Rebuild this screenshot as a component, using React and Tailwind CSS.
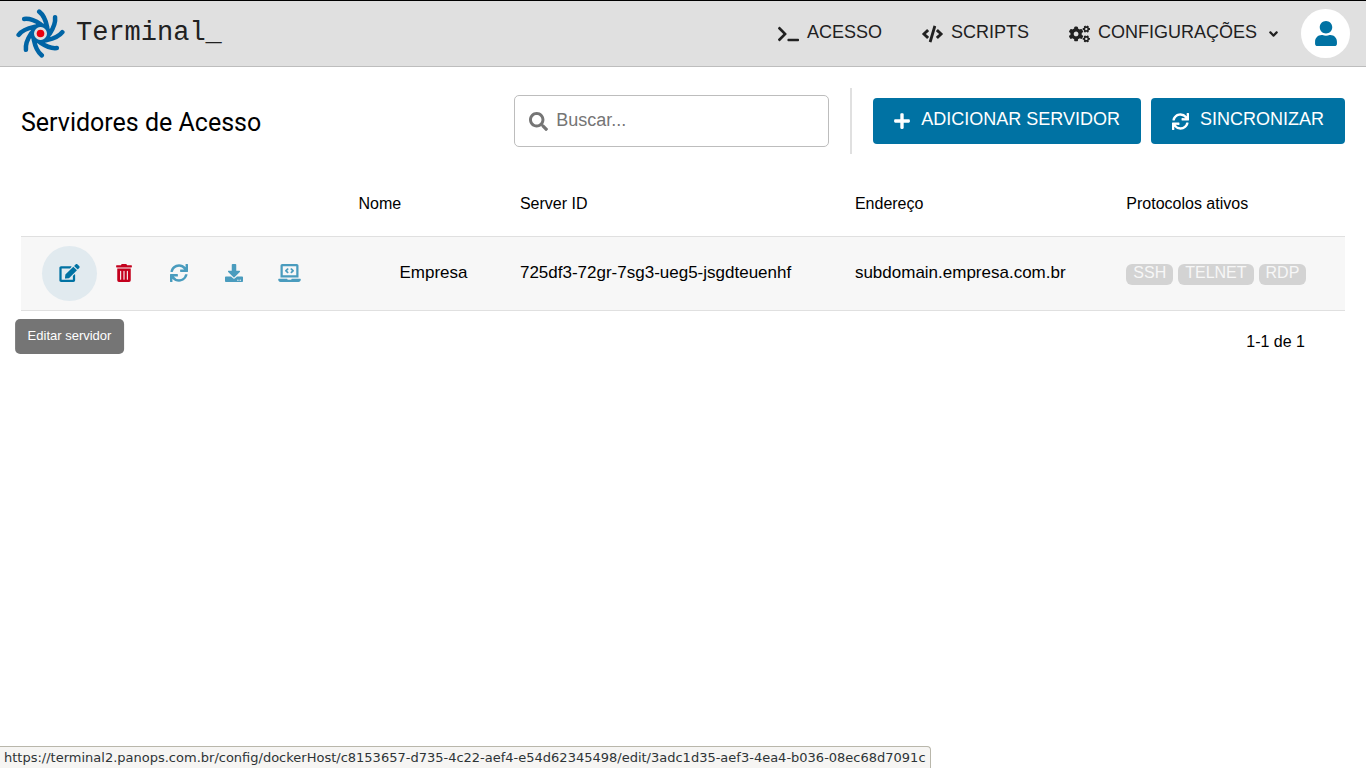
import { useState } from "react";
import {
  FaTerminal,
  FaCode,
  FaCogs,
  FaAngleDown,
  FaUser,
  FaSearch,
  FaPlus,
  FaSync,
  FaEdit,
  FaTrashAlt,
  FaDownload,
  FaLaptopCode,
} from "react-icons/fa";

const EDIT_PATH =
  "/config/dockerHost/c8153657-d735-4c22-aef4-e54d62345498/edit/3adc1d35-aef3-4ea4-b036-08ec68d7091c";

const server = {
  name: "Empresa",
  id: "725df3-72gr-7sg3-ueg5-jsgdteuenhf",
  address: "subdomain.empresa.com.br",
  protocols: ["SSH", "TELNET", "RDP"],
};

function Logo() {
  return (
    <svg viewBox="-25 -25 50 50" className="size-[49px]" aria-hidden="true">
      <g fill="none" stroke="#0064a5" strokeWidth="4.6" strokeLinecap="round">
        {[0, 45, 90, 135, 180, 225, 270, 315].map((angle) => (
          <path key={angle} d="M-1.3 -22.3 C3 -19 5.5 -13 6.8 -6.5" transform={`rotate(${angle})`} />
        ))}
      </g>
      <circle r="8.4" fill="#e0e0e0" stroke="#0064a5" strokeWidth="4.6" />
      <circle r="6.6" fill="#e0e0e0" />
      <circle r="3.9" fill="#e8000f" />
    </svg>
  );
}

function NavItem({ icon, children }) {
  return (
    <a href="#" className="flex items-center gap-2 text-lg text-[#212121]">
      {icon}
      <span className="pb-1">{children}</span>
    </a>
  );
}

function Header() {
  return (
    <header className="flex items-center justify-between border-t border-b border-t-black border-b-[#bdbdbd] bg-[#e0e0e0] px-4 py-2">
      <a href="#" className="flex items-center gap-[11px]">
        <Logo />
        <span className="pb-0.5 font-['Liberation_Mono',monospace] text-[27px] leading-8 text-[#212121]">
          Terminal_
        </span>
      </a>
      <div className="flex items-center gap-[23px]">
        <nav className="flex items-center gap-10">
          <NavItem icon={<FaTerminal className="h-[18px] w-[21px]" />}>ACESSO</NavItem>
          <NavItem icon={<FaCode className="h-[18px] w-[21px]" />}>SCRIPTS</NavItem>
          <button type="button" className="flex items-center gap-2 text-lg text-[#212121]">
            <FaCogs className="h-[18px] w-[21px]" />
            <span className="pb-1">CONFIGURAÇÕES</span>
            <FaAngleDown className="ml-1 h-[14px] w-[9px]" />
          </button>
        </nav>
        <button
          type="button"
          aria-label="Conta"
          className="flex size-[49px] items-center justify-center rounded-full bg-white text-[#0072a3]"
        >
          <FaUser className="h-[25px] w-[22px]" />
        </button>
      </div>
    </header>
  );
}

function PrimaryButton({ icon, children }) {
  return (
    <button
      type="button"
      className="flex h-[46px] items-center gap-[11px] rounded bg-[#0072a3] px-[21px] text-lg text-white"
    >
      {icon}
      <span className="pb-1">{children}</span>
    </button>
  );
}

function Toolbar() {
  const [query, setQuery] = useState("");
  return (
    <div className="flex items-center justify-between">
      <h1 className="pt-1 font-[Roboto,sans-serif] text-[25px] text-black">Servidores de Acesso</h1>
      <div className="flex items-center gap-[21px]">
        <label className="flex h-[52px] w-[315px] items-center gap-2 rounded-[5px] border border-[#bdbdbd] px-3.5 text-[#757575]">
          <FaSearch className="size-[19px] shrink-0" />
          <input
            type="text"
            aria-label="Buscar"
            placeholder="Buscar..."
            value={query}
            onChange={(e) => setQuery(e.target.value)}
            className="w-full min-w-0 bg-transparent pb-0.5 text-lg outline-none placeholder:text-[#757575]"
          />
        </label>
        <div className="h-[66px] w-0.5 bg-[#e0e0e0]" />
        <div className="flex items-center gap-2.5">
          <PrimaryButton icon={<FaPlus className="h-[18px] w-4" />}>ADICIONAR SERVIDOR</PrimaryButton>
          <PrimaryButton icon={<FaSync className="size-[17px]" />}>SINCRONIZAR</PrimaryButton>
        </div>
      </div>
    </div>
  );
}

function RowActions() {
  const action = "flex size-[55px] items-center justify-center rounded-full";
  return (
    <div className="flex items-center">
      <div className="relative">
        <a
          href={EDIT_PATH}
          aria-describedby="edit-tip"
          aria-label="Editar"
          className={`${action} bg-[#e1eaef] text-[#0072a3]`}
        >
          <FaEdit className="h-[18px] w-[21px]" />
        </a>
        <div
          id="edit-tip"
          role="tooltip"
          className="absolute top-full left-1/2 mt-[18px] flex h-[35px] -translate-x-1/2 items-center rounded-[5px] bg-[#757575] px-[13px] text-[13px] whitespace-nowrap text-white"
        >
          Editar servidor
        </div>
      </div>
      <button type="button" aria-label="Excluir servidor" className={`${action} text-[#c4001d]`}>
        <FaTrashAlt className="h-[18px] w-4" />
      </button>
      <button type="button" aria-label="Sincronizar servidor" className={`${action} text-[#4a9cbe]`}>
        <FaSync className="size-[18px]" />
      </button>
      <button type="button" aria-label="Baixar" className={`${action} text-[#4a9cbe]`}>
        <FaDownload className="size-[18px]" />
      </button>
      <button type="button" aria-label="Console" className={`${action} text-[#4a9cbe]`}>
        <FaLaptopCode className="h-[18px] w-[23px]" />
      </button>
    </div>
  );
}

function ServerTable() {
  return (
    <table className="mt-4 w-full table-fixed text-left text-black">
      <thead>
        <tr className="h-[66px] border-b border-[#e0e0e0] text-base">
          <th className="w-[23.9%]"></th>
          <th className="w-[12.2%] px-[21px] pt-0.5 font-normal">Nome</th>
          <th className="w-[25.3%] px-[21px] pt-0.5 font-normal">Server ID</th>
          <th className="w-[20.5%] px-[21px] pt-0.5 font-normal">Endereço</th>
          <th className="px-[21px] pt-0.5 font-normal">Protocolos ativos</th>
        </tr>
      </thead>
      <tbody>
        <tr className="border-b border-[#e0e0e0] bg-[#f7f7f7] text-[17px]">
          <td className="px-[21px] py-[9px]">
            <RowActions />
          </td>
          <td className="pl-[62px]">{server.name}</td>
          <td className="px-[21px] whitespace-nowrap">{server.id}</td>
          <td className="px-[21px] whitespace-nowrap">{server.address}</td>
          <td className="pt-0.5 pl-[21px]">
            <div className="flex gap-[5px] text-base text-[#f7f7f7]">
              {server.protocols.map((p) => (
                <span key={p} className="h-[21px] rounded-md bg-[#d3d3d3] px-[7px] leading-[18px]">
                  {p}
                </span>
              ))}
            </div>
          </td>
        </tr>
      </tbody>
    </table>
  );
}

export default function App() {
  return (
    <div className="min-h-screen bg-white font-['Liberation_Sans',Arial,sans-serif]">
      <Header />
      <main className="px-[21px] pt-[21px]">
        <Toolbar />
        <ServerTable />
        <p className="px-10 pt-[19px] text-right text-base text-black">1-1 de 1</p>
      </main>
      <div className="fixed bottom-0 left-0 h-[22px] rounded-tr border-t border-r border-[#b9b7ab] bg-[#f6f5f3] px-1 font-['DejaVu_Sans',sans-serif] text-[13px] leading-[21px] whitespace-nowrap text-[#2e3436]">
        https://terminal2.panops.com.br{EDIT_PATH}
      </div>
    </div>
  );
}
